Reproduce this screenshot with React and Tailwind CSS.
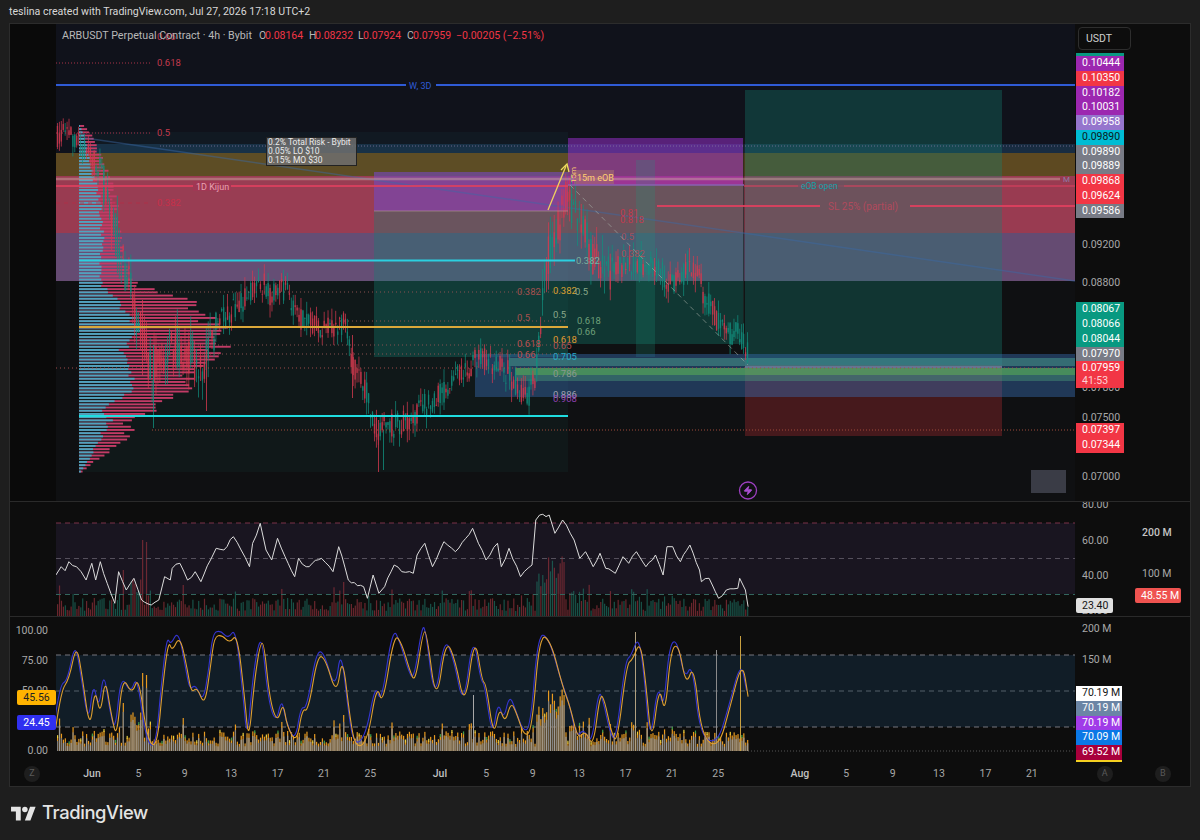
import React from 'react';
import { Zap } from 'lucide-react';

// seeded random so every render gives the same candles
let seed = 1337;
const rnd = () => {
  seed = (seed * 16807) % 2147483647;
  return (seed - 1) / 2147483646;
};

const interp = (pts, x) => {
  for (let i = 0; i < pts.length - 1; i++) {
    if (x <= pts[i + 1][0]) {
      const t = (x - pts[i][0]) / (pts[i + 1][0] - pts[i][0] || 1);
      return pts[i][1] + (pts[i + 1][1] - pts[i][1]) * t;
    }
  }
  return pts[pts.length - 1][1];
};

const zl = (pts) => pts.map(([x, y]) => [x / 2.613, 500 + y / 3]);
const zr = (pts) => pts.map(([x, y]) => [600 + x / 2.613, 500 + y / 3]);
const toLine = (pts) => pts.map(([x, y]) => `${x.toFixed(1)},${y.toFixed(1)}`).join(' ');

// quadratic curve through the midpoints, for the stochastic lines
const toSmooth = (pts) => {
  let d = `M${pts[0][0].toFixed(1)} ${pts[0][1].toFixed(1)}`;
  for (let i = 1; i < pts.length - 1; i++) {
    const mx = (pts[i][0] + pts[i + 1][0]) / 2;
    const my = (pts[i][1] + pts[i + 1][1]) / 2;
    d += ` Q${pts[i][0].toFixed(1)} ${pts[i][1].toFixed(1)} ${mx.toFixed(1)} ${my.toFixed(1)}`;
  }
  const last = pts[pts.length - 1];
  return `${d} L${last[0].toFixed(1)} ${last[1].toFixed(1)}`;
};

// adds small steps between the points, for the rsi line
const roughen = (pts) => {
  const out = [];
  for (let i = 0; i < pts.length - 1; i++) {
    const [x1, y1] = pts[i];
    const [x2, y2] = pts[i + 1];
    const steps = Math.max(1, Math.floor((x2 - x1) / 3));
    for (let s = 0; s < steps; s++) {
      const t = s / steps;
      const n = s === 0 ? 0 : (rnd() - 0.5) * 3.5;
      out.push([x1 + (x2 - x1) * t, y1 + (y2 - y1) * t + n]);
    }
  }
  out.push(pts[pts.length - 1]);
  return out;
};

const pricePath = [
  [56, 138], [70, 134], [85, 150], [100, 170], [115, 230], [130, 290], [145, 340], [150, 370], [165, 350], [180, 345],
  [195, 360], [205, 365], [215, 325], [230, 310], [245, 300], [260, 280], [272, 295], [285, 290], [300, 320], [320, 330],
  [345, 325], [352, 360], [365, 390], [378, 435], [385, 425], [400, 425], [415, 415], [430, 400], [450, 385], [475, 360],
  [490, 360], [510, 375], [525, 400], [535, 380], [545, 265], [555, 235], [568, 195], [575, 215], [590, 250], [610, 270],
  [630, 265], [650, 265], [670, 280], [695, 270], [710, 310], [725, 335], [740, 335], [748, 352],
];

const candles = [];
for (let i = 0; i < 358; i++) {
  const x = 57 + i * 1.933;
  const base = interp(pricePath, x);
  const wide = x < 100 ? 1.2 : x < 215 || (x > 540 && x < 610) ? 2.2 : 1.3;
  const open = base + (rnd() - 0.5) * 20 * wide;
  const close = base + (rnd() - 0.5) * 20 * wide;
  const top = Math.min(open, close) - rnd() * 10 * wide;
  const bottom = Math.max(open, close) + rnd() * 10 * wide;
  candles.push({ x, open, close, top, bottom, up: close < open });
}
const spikes = [[153, 345, 428, true], [206, 350, 411, false], [142, 300, 375, false], [352, 335, 398, false], [378, 420, 472, false], [383, 430, 470, true]];

const vpRows = [];
const vpShape = [
  [125, 80, 84], [135, 84, 92], [170, 92, 106], [200, 100, 115], [240, 102, 118], [280, 100, 130], [302, 118, 191],
  [327, 140, 215], [350, 120, 215], [375, 135, 195], [395, 125, 175], [410, 100, 150], [420, 110, 125], [430, 105, 133],
  [445, 95, 115], [460, 88, 95], [472, 80, 81],
];
for (let y = 125; y < 472; y += 3.2) {
  const j = 0.88 + rnd() * 0.24;
  const blue = interp(vpShape.map((r) => [r[0], r[1]]), y);
  const pink = interp(vpShape.map((r) => [r[0], r[2]]), y);
  vpRows.push({ y, blue: 79 + (blue - 79) * j, pink: 79 + (pink - 79) * j });
}

const volumes = candles.map((c) => {
  let h = 5 + rnd() * 13;
  if (rnd() > 0.92) h += rnd() * 18;
  if (c.x > 535 && c.x < 565) h += 12 + rnd() * 38;
  if (c.x > 565 && c.x < 590) h += rnd() * 14;
  if (c.x > 130 && c.x < 150) h += rnd() * 22;
  return { x: c.x, h, up: c.up };
});
volumes[44].h = 76;
volumes[46].h = 74;
volumes[34].h = 46;
volumes[148].h = 34;

const rsiLine = roughen([
  ...zl([[146, 225], [160, 200], [170, 212], [180, 185], [200, 200], [212, 215], [225, 240], [240, 190], [250, 240], [262, 185], [280, 250], [300, 310], [310, 215], [330, 270], [350, 235], [370, 300], [395, 315], [415, 300], [430, 230], [445, 240], [450, 205], [470, 190], [490, 240], [510, 215], [525, 245], [550, 180], [565, 145], [585, 150], [610, 110], [630, 150], [652, 200], [660, 130], [680, 70], [695, 150], [710, 180], [725, 115], [745, 170], [770, 230], [780, 175], [800, 200], [840, 175], [870, 215], [885, 140], [910, 240], [950, 260], [960, 295], [975, 225], [990, 280], [1005, 260], [1030, 195], [1050, 215], [1080, 220], [1090, 165], [1110, 130], [1130, 200], [1160, 125], [1190, 155], [1235, 85], [1250, 130], [1270, 180], [1300, 130], [1310, 200], [1330, 145], [1360, 230], [1390, 195], [1400, 60], [1410, 45], [1435, 45], [1450, 100], [1470, 60], [1500, 120], [1515, 175], [1530, 155], [1550, 200]]),
  ...zr([[0, 160], [15, 205], [40, 220], [60, 170], [75, 190], [95, 155], [120, 200], [145, 165], [165, 225], [175, 140], [190, 140], [210, 185], [235, 135], [260, 210], [265, 245], [285, 235], [310, 295], [330, 270], [360, 265], [365, 235], [380, 270], [387, 320]]),
]);

const stochLine = [
  ...zl([[146, 680], [160, 570], [180, 540], [200, 430], [215, 530], [235, 695], [248, 560], [262, 650], [275, 530], [290, 640], [305, 720], [320, 525], [345, 585], [362, 525], [385, 720], [410, 745], [425, 560], [440, 420], [450, 455], [470, 405], [490, 510], [500, 580], [515, 560], [535, 620], [550, 500], [560, 410], [580, 405], [600, 430], [620, 400], [640, 600], [650, 730], [665, 540], [680, 430], [690, 430], [705, 600], [725, 670], [740, 605], [750, 680], [775, 730], [790, 625], [805, 635], [830, 465], [850, 475], [880, 590], [895, 460], [915, 660], [930, 745], [960, 725], [985, 550], [1000, 620], [1030, 400], [1050, 430], [1070, 510], [1085, 550], [1105, 395], [1115, 395], [1140, 620], [1165, 415], [1190, 480], [1215, 630], [1240, 400], [1260, 545], [1270, 550], [1290, 715], [1305, 620], [1320, 670], [1335, 605], [1350, 640], [1370, 710], [1390, 690], [1410, 400], [1440, 425], [1470, 560], [1490, 620], [1510, 720], [1530, 690], [1550, 745]]),
  ...zr([[0, 580], [12, 600], [30, 700], [45, 730], [70, 490], [85, 480], [105, 420], [120, 550], [135, 740], [155, 550], [170, 650], [185, 450], [205, 430], [225, 560], [245, 490], [265, 710], [310, 745], [340, 620], [372, 480], [387, 590]]),
];
const stochBlue = stochLine.map(([x, y]) => [x - 1.5, Math.min(750, y - 3 + (rnd() - 0.5) * 8)]);

const bands = [
  { x: 85, y: 144, h: 9, fill: '#2a6a9a', o: 0.3 },
  { x: 56, y: 153, h: 23, fill: '#c8972a', o: 0.42 },
  { x: 56, y: 176, h: 57, fill: '#e0506e', o: 0.66 },
  { x: 56, y: 233, h: 48, fill: '#9a6fa8', o: 0.62 },
];

const fibs = [
  ['0.66', 157, 40, '#c23a4e'], ['0.618', 157, 66, '#c23a4e'], ['0.5', 157, 136, '#c23a4e'], ['0.382', 157, 206, '#c8304a'],
  ['0.382', 517, 295, '#a5504f'], ['0.382', 553, 294, '#d8a030'], ['0.5', 575, 295, '#8aa88a'], ['0.5', 517, 321, '#a5504f'],
  ['0.5', 553, 318, '#8aa88a'], ['0.618', 577, 324, '#6fa07a'], ['0.66', 577, 335, '#6fa07a'], ['0.618', 553, 343, '#e09a30'],
  ['0.65', 553, 349, '#b05050'], ['0.618', 517, 347, '#b85050'], ['0.66', 517, 358, '#b85050'], ['0.705', 553, 360, '#2aa8c8'],
  ['0.786', 553, 377, '#8a9a90'], ['0.886', 553, 398, '#a0a0b0'], ['0.908', 553, 402, '#9040b0'], ['0.382', 576, 264, '#7ab0a0'],
  ['0.81', 620, 216, '#c23a4e'], ['0.818', 620, 223, '#c23a4e'], ['0.5', 621, 240, '#a5505a'], ['0.382', 621, 257, '#a5505a'],
];

const priceTop = [
  ['0.10444', 'bg-[#9c27b0]', 'text-white'], ['0.10350', 'bg-[#f23645]', 'text-white'], ['0.10182', 'bg-[#9c27b0]', 'text-white'],
  ['0.10031', 'bg-[#9c27b0]', 'text-white'], ['0.09958', 'bg-[#9575cd]', 'text-white'], ['0.09890', 'bg-[#00bcd4]', 'text-[#0b1a20]'],
  ['0.09890', 'bg-[#787b86]', 'text-white'], ['0.09889', 'bg-[#787b86]', 'text-white'], ['0.09868', 'bg-[#f23645]', 'text-white'],
  ['0.09624', 'bg-[#f23645]', 'text-white'], ['0.09586', 'bg-[#787b86]', 'text-white'],
];

const stochTags = [
  ['70.19 M', 'bg-white', 'text-[#131313]'], ['70.19 M', 'bg-[#6b85a5]', 'text-white'], ['70.19 M', 'bg-[#a03be8]', 'text-white'],
  ['70.09 M', 'bg-[#0a78e6]', 'text-white'], ['69.52 M', 'bg-[#a8003c]', 'text-white'],
];

function Tag({ text, bg, color, className = '' }) {
  return <div className={`relative z-10 h-[14.75px] leading-[14.75px] pl-[6px] ${bg} ${color} ${className}`}>{text}</div>;
}

function MainChart() {
  return (
    <svg viewBox="56 24 1019 477" className="block w-[1019px] h-[477px]" fontFamily="Roboto, sans-serif">
      <rect x="56" y="24" width="1019" height="477" fill="#0f1012" />
      <rect x="56" y="24" width="1019" height="257" fill="#10121b" />
      <rect x="79" y="132" width="489" height="340" fill="#1f9a9a" opacity="0.06" />
      {bands.map((b) => (
        <rect key={b.y} x={b.x} y={b.y} width={1075 - b.x} height={b.h} fill={b.fill} opacity={b.o} />
      ))}
      {/* position boxes */}
      <rect x="374" y="172" width="194" height="185" fill="#148272" opacity="0.35" />
      <rect x="568" y="185" width="176" height="159" fill="#148272" opacity="0.35" />
      <rect x="745" y="90" width="257" height="275" fill="#148272" opacity="0.33" />
      <rect x="745" y="365" width="257" height="71" fill="#b02a30" opacity="0.35" />
      <rect x="374" y="172" width="194" height="39" fill="#a030d8" opacity="0.45" />
      <rect x="568" y="138" width="175" height="47" fill="#a030d8" opacity="0.5" />
      <rect x="636" y="160" width="19" height="197" fill="#1a9a80" opacity="0.22" />
      <rect x="743" y="138" width="1.5" height="206" fill="#1a1a1a" opacity="0.6" />
      {/* fvg bands near price */}
      <rect x="475" y="354" width="600" height="43" fill="#3a70b8" opacity="0.42" />
      <rect x="509" y="358" width="566" height="8" fill="#4aa090" opacity="0.5" />
      <rect x="515" y="368" width="560" height="7" fill="#5fc060" opacity="0.62" />
      <rect x="515" y="375" width="560" height="6" fill="#4a9a7a" opacity="0.45" />
      <line x1="745" x2="1002" y1="367" y2="367" stroke="#a0c8e0" strokeWidth="1" opacity="0.8" />
      {/* volume profile */}
      {vpRows.map((r) => (
        <g key={r.y}>
          <rect x="79" y={r.y} width={r.pink - 79} height="1.9" fill="#c23b66" />
          <rect x="79" y={r.y} width={r.blue - 79} height="1.9" fill="#38b6cf" opacity="0.85" />
        </g>
      ))}
      {/* trend line */}
      <line x1="85" y1="138" x2="1075" y2="281" stroke="#3a6aa8" strokeWidth="1.5" opacity="0.45" />
      {/* candles */}
      <g opacity="0.88">
        {candles.map((c) => (
          <g key={c.x} fill={c.up ? '#12907f' : '#d63a50'}>
            <rect x={c.x} y={c.top} width="0.8" height={c.bottom - c.top} />
            <rect x={c.x - 0.2} y={Math.min(c.open, c.close)} width="1.3" height={Math.abs(c.open - c.close) + 0.5} />
          </g>
        ))}
        {spikes.map(([x, a, b, up]) => (
          <rect key={x} x={x} y={a} width="0.9" height={b - a} fill={up ? '#12907f' : '#d63a50'} />
        ))}
      </g>
      {/* horizontal levels */}
      <line x1="56" x2="150" y1="63" y2="63" stroke="#a83348" strokeDasharray="1 2" />
      <line x1="56" x2="150" y1="133" y2="133" stroke="#a83348" strokeDasharray="1 2" />
      <line x1="56" x2="150" y1="203" y2="203" stroke="#b82c44" strokeDasharray="4 4" opacity="0.7" />
      <line x1="160" x2="1075" y1="146" y2="146" stroke="#8a7ea8" strokeDasharray="1 2" opacity="0.7" />
      <line x1="56" x2="1075" y1="85" y2="85" stroke="#2f5bd6" strokeWidth="2" />
      <rect x="406" y="80" width="30" height="10" fill="#10121b" />
      <text x="409" y="89" fontSize="9" fill="#2f5bd6">W, 3D</text>
      <line x1="56" x2="1060" y1="179" y2="179" stroke="#c9a3a0" strokeWidth="2.5" opacity="0.5" />
      <text x="1063" y="182" fontSize="8" fill="#8a7ea8">M</text>
      <line x1="56" x2="568" y1="186" y2="186" stroke="#e0405f" strokeWidth="1.8" opacity="0.85" />
      <line x1="568" x2="744" y1="185" y2="185" stroke="#8a60b0" strokeWidth="1.5" />
      <line x1="744" x2="1075" y1="186" y2="186" stroke="#e0405f" strokeWidth="1.5" opacity="0.7" />
      <rect x="193" y="181" width="38" height="10" fill="#a03854" />
      <text x="196" y="190" fontSize="9" fill="#e8a0b0">1D Kijun</text>
      <line x1="374" x2="568" y1="211" y2="211" stroke="#b89a9a" strokeWidth="1.5" opacity="0.4" />
      <rect x="798" y="181" width="46" height="9" fill="#6f515f" opacity="0.7" />
      <text x="801" y="188.5" fontSize="8.5" fill="#14a0a8">eOB open</text>
      <line x1="657" x2="820" y1="206" y2="206" stroke="#e0405f" strokeWidth="2" opacity="0.9" />
      <line x1="910" x2="1075" y1="206" y2="206" stroke="#e0405f" strokeWidth="2" opacity="0.9" />
      <text x="828" y="210" fontSize="10" fill="#b04a5c">SL 25% (partial)</text>
      <line x1="79" x2="575" y1="260.5" y2="260.5" stroke="#2bd0e0" strokeWidth="2" />
      <line x1="79" x2="568" y1="327" y2="327" stroke="#dba83a" strokeWidth="2" />
      <line x1="79" x2="568" y1="416" y2="416" stroke="#1fdde0" strokeWidth="2" />
      <line x1="140" x2="568" y1="292" y2="292" stroke="#8a5050" strokeDasharray="1 3" />
      <line x1="340" x2="568" y1="321" y2="321" stroke="#8a5050" strokeDasharray="1 3" />
      <line x1="150" x2="568" y1="345" y2="345" stroke="#8a5050" strokeDasharray="1 3" />
      <line x1="150" x2="568" y1="354" y2="354" stroke="#8a5050" strokeDasharray="1 3" />
      <line x1="56" x2="1075" y1="368" y2="368" stroke="#a04a4a" strokeDasharray="1 3" />
      <line x1="152" x2="1075" y1="430" y2="430" stroke="#a04a3a" strokeDasharray="1 2" />
      {fibs.map(([t, x, y, c]) => (
        <text key={`${t}${x}${y}`} x={x} y={y} fontSize="9.5" fill={c}>{t}</text>
      ))}
      {/* drawings around the high */}
      <line x1="570" y1="185" x2="748" y2="365" stroke="#a8b0a8" strokeWidth="1" strokeDasharray="5 4" opacity="0.6" />
      <line x1="548" y1="210" x2="566" y2="166" stroke="#f0d060" strokeWidth="1.3" />
      <path d="M561 170 L567 164 L569 172" fill="none" stroke="#f0e060" strokeWidth="1.3" />
      <rect x="574" y="170" width="40" height="14" fill="#a06a70" opacity="0.65" />
      <text x="577" y="180.5" fontSize="9" fill="#ffcf70">15m eOB</text>
      <text x="0" y="0" fontSize="8" fill="#ffcf70" transform="translate(576 183) rotate(-90)">15m</text>
      {/* risk note */}
      <rect x="266.5" y="137.5" width="90" height="28" fill="#6f6f6f" fillOpacity="0.85" stroke="#222" />
      <text fontSize="8.5" fill="#ececec">
        <tspan x="268" y="145">0.2% Total Risk - Bybit</tspan>
        <tspan x="268" y="154">0.05%  LO $10</tspan>
        <tspan x="268" y="163">0.15% MO  $30</tspan>
      </text>
      {/* legend */}
      <text fontSize="10.5" fill="#b8b8b8" y="39">
        <tspan x="62" fontSize="10.7">ARBUSDT Perpetual Contract · 4h · Bybit</tspan>
        <tspan x="259">O</tspan><tspan x="265" fill="#f23645">0.08164</tspan>
        <tspan x="309">H</tspan><tspan x="315" fill="#f23645">0.08232</tspan>
        <tspan x="358">L</tspan><tspan x="363" fill="#f23645">0.07924</tspan>
        <tspan x="407">C</tspan><tspan x="413" fill="#f23645">0.07959</tspan>
        <tspan x="456" fill="#f23645">−0.00205 (−2.51%)</tspan>
      </text>
      <rect x="1031" y="470" width="35" height="23" fill="#3a3c46" />
      <circle cx="748" cy="490.5" r="8.5" fill="none" stroke="#9c3fc0" strokeWidth="1.3" />
      <g transform="translate(743 485.5)">
        <Zap width="10" height="10" color="#a84fd0" fill="#a84fd0" />
      </g>
    </svg>
  );
}

function RsiChart() {
  return (
    <svg viewBox="56 502 1019 114" className="block w-[1019px] h-[114px]">
      <rect x="56" y="502" width="1019" height="114" fill="#0d0d0d" />
      <rect x="56" y="523" width="1019" height="71" fill="#191520" />
      {volumes.map((v) => (
        <rect key={v.x} x={v.x} y={616 - v.h} width="1.2" height={v.h} fill={v.up ? '#1c6a5c' : '#8a2f38'} opacity="0.75" />
      ))}
      <line x1="56" x2="1075" y1="523" y2="523" stroke="#7a3348" strokeDasharray="5 4" />
      <line x1="56" x2="1075" y1="558.5" y2="558.5" stroke="#55505c" strokeDasharray="5 4" />
      <line x1="56" x2="1075" y1="594.5" y2="594.5" stroke="#33665e" strokeDasharray="5 4" />
      <polyline points={toLine(rsiLine)} fill="none" stroke="#dcdcdc" strokeWidth="1" />
    </svg>
  );
}

function StochChart() {
  return (
    <svg viewBox="56 617 1019 145" className="block w-[1019px] h-[145px]">
      <rect x="56" y="617" width="1019" height="145" fill="#0d0d0d" />
      <rect x="56" y="655" width="1019" height="72" fill="#111d27" />
      <line x1="56" x2="1075" y1="655" y2="655" stroke="#77777e" strokeDasharray="5 4" />
      <line x1="56" x2="1075" y1="691" y2="691" stroke="#55606a" strokeDasharray="5 4" />
      <line x1="56" x2="1075" y1="727" y2="727" stroke="#77777e" strokeDasharray="5 4" />
      <line x1="748" x2="1075" y1="751" y2="751" stroke="#555" strokeDasharray="1 2" />
      {volumes.map((v, i) => (
        <g key={v.x}>
          <rect x={v.x} y={751 - v.h - 2} width="1.2" height={v.h + 2} fill="#e89a20" />
          <rect x={v.x} y={751 - v.h * 0.85} width="1.2" height={v.h * 0.85} fill={i % 2 ? '#9a9a9a' : '#7f7f7f'} />
          {i % 6 === 0 && <rect x={v.x} y={751 - v.h - 4} width="1.2" height="3" fill={i % 12 ? '#3fa04a' : '#e8d040'} />}
        </g>
      ))}
      <rect x="716" y="650" width="1" height="101" fill="#8a8a8a" />
      <rect x="740" y="636" width="1" height="115" fill="#c8a040" />
      <rect x="635" y="632" width="1" height="119" fill="#b0a080" />
      <rect x="473" y="695" width="1" height="56" fill="#a8a8a8" />
      <path d={toSmooth(stochBlue)} fill="none" stroke="#3535d0" strokeWidth="1.1" />
      <path d={toSmooth(stochLine)} fill="none" stroke="#e0a030" strokeWidth="1.1" />
    </svg>
  );
}

function AxisCircle({ label, className = '' }) {
  return (
    <div className={`w-[16px] h-[16px] rounded-full bg-[#1e1e1e] text-[#5a5a5a] text-[9px] flex items-center justify-center ${className}`}>{label}</div>
  );
}

export default function App() {
  const scale = 'text-[10.5px] text-[#a8a8a8]';

  return (
    <div className="w-[1200px] h-[840px] bg-[#1e1e1e] flex flex-col font-[Roboto,sans-serif] overflow-hidden">
      <div className="h-[23px] pl-[9px] flex items-center text-[#d8d8d8] text-[10.6px]">
        teslina created with TradingView.com, Jul 27, 2026 17:18 UTC+2
      </div>

      <div className="ml-[9px] w-[1182px] h-[764px] border border-[#2c2c2c] flex flex-col bg-[#0d0d0d]">
        {/* main pane */}
        <div className="flex h-[478px] border-b border-[#2a2a2a] overflow-hidden">
          <div className="w-[46px] bg-[#0a0a0a]" />
          <MainChart />
          <div className={`w-[115px] flex flex-col items-start ${scale}`}>
            <div className="ml-[3px] mt-[3px] w-[53px] h-[23px] rounded-[4px] border border-[#2e2e2e] pl-[7px] flex items-center text-[#cfcfcf]">USDT</div>
            <div className="ml-[1px] mt-[3px] w-[48px] h-[3px] bg-[#089981]" />
            <div className="ml-[1px] w-[48px]">
              {priceTop.map(([t, bg, c], i) => (
                <Tag key={i} text={t} bg={bg} color={c} />
              ))}
            </div>
            <div className="ml-[7px] mt-[20px] h-[14px] leading-[14px]">0.09200</div>
            <div className="ml-[7px] mt-[24px] h-[14px] leading-[14px]">0.08800</div>
            <div className="ml-[1px] mt-[12px] w-[48px]">
              <Tag text="0.08067" bg="bg-[#089981]" color="text-white" />
              <Tag text="0.08066" bg="bg-[#089981]" color="text-white" />
              <Tag text="0.08044" bg="bg-[#089981]" color="text-white" />
              <Tag text="0.07970" bg="bg-[#787b86]" color="text-white" />
              <div className="relative z-10 h-[27px] pl-[6px] pt-[1px] bg-[#f23645] text-white leading-[12.5px]">
                0.07959
                <div className="text-[#ffd0d4]">41:53</div>
              </div>
            </div>
            <div className="ml-[7px] mt-[-7px] h-[14px] leading-[14px]">0.07800</div>
            <div className="ml-[7px] mt-[16px] h-[14px] leading-[14px]">0.07500</div>
            <div className="relative z-10 ml-[1px] mt-[-2px] w-[48px]">
              <Tag text="0.07397" bg="bg-[#f23645]" color="text-white" />
              <Tag text="0.07344" bg="bg-[#f23645]" color="text-white" />
            </div>
            <div className="ml-[7px] mt-[17px] h-[14px] leading-[14px]">0.07000</div>
          </div>
        </div>

        {/* rsi + volume pane */}
        <div className="flex h-[115px] border-b border-[#2a2a2a] overflow-hidden">
          <div className="w-[46px]" />
          <RsiChart />
          <div className={`w-[115px] flex ${scale}`}>
            <div className="w-[60px] flex flex-col items-start">
              <div className="ml-[7px] mt-[-4px] h-[14px] leading-[14px]">80.00</div>
              <div className="ml-[7px] mt-[22px] h-[14px] leading-[14px]">60.00</div>
              <div className="ml-[7px] mt-[21px] h-[14px] leading-[14px]">40.00</div>
              <div className="relative z-10 ml-[1px] mt-[15px] w-[37px] h-[15px] leading-[15px] pl-[6px] rounded-[2px] bg-[#e0e0e0] text-[#131313]">23.40</div>
              <div className="ml-[7px] mt-[-9px] h-[14px] leading-[14px]">20.00</div>
            </div>
            <div className="flex flex-col items-start">
              <div className="ml-[7px] mt-[24px] h-[14px] leading-[14px] font-medium text-[#c4c4c4]">200 M</div>
              <div className="ml-[7px] mt-[27px] h-[14px] leading-[14px]">100 M</div>
              <div className="mt-[7px] w-[46px] h-[15px] leading-[15px] pl-[6px] rounded-[2px] bg-[#ef5350] text-white">48.55 M</div>
            </div>
          </div>
        </div>

        {/* stoch pane */}
        <div className="flex h-[145px] overflow-hidden">
          <div className={`w-[46px] flex flex-col items-end ${scale}`}>
            <div className="mr-[8px] mt-[7px] h-[14px] leading-[14px]">100.00</div>
            <div className="mr-[8px] mt-[16px] h-[14px] leading-[14px]">75.00</div>
            <div className="mr-[8px] mt-[16px] h-[14px] leading-[14px]">50.00</div>
            <div className="relative z-10 mt-[-8px] w-[39px] h-[15px] leading-[15px] text-center rounded-[2px] bg-[#ffb300] text-[#222]">45.56</div>
            <div className="mt-[10px] w-[39px] h-[15px] leading-[15px] text-center rounded-[2px] bg-[#3030f0] text-white">24.45</div>
            <div className="mr-[8px] mt-[14px] h-[14px] leading-[14px]">0.00</div>
          </div>
          <StochChart />
          <div className={`w-[115px] flex flex-col items-start ${scale}`}>
            <div className="ml-[7px] mt-[5px] h-[14px] leading-[14px]">200 M</div>
            <div className="ml-[7px] mt-[17px] h-[14px] leading-[14px]">150 M</div>
            <div className="ml-[1px] mt-[19px] w-[46px]">
              {stochTags.map(([t, bg, c], i) => (
                <Tag key={i} text={t} bg={bg} color={c} />
              ))}
              <div className="h-[3px] bg-[#f5d020]" />
            </div>
          </div>
        </div>

        {/* time axis */}
        <div className="flex items-center h-[24px] text-[10.5px] text-[#a8a8a8] text-center">
          <AxisCircle label="Z" className="ml-[14px] shrink-0" />
          <div className="ml-[28.8px] w-[46.4px] font-medium text-[#c0c0c0]">Jun</div>
          {['5', '9', '13', '17', '21', '25'].map((d) => (
            <div key={d} className="w-[46.4px]">{d}</div>
          ))}
          <div className="ml-[23.2px] w-[46.4px] font-medium text-[#c0c0c0]">Jul</div>
          {['5', '9', '13', '17', '21', '25'].map((d) => (
            <div key={d} className="w-[46.4px]">{d}</div>
          ))}
          <div className="ml-[35.2px] w-[46.4px] font-medium text-[#c0c0c0]">Aug</div>
          {['5', '9', '13', '17', '21'].map((d) => (
            <div key={d} className="w-[46.4px]">{d}</div>
          ))}
          <AxisCircle label="A" className="ml-[41.8px] shrink-0" />
          <AxisCircle label="B" className="ml-[42px] shrink-0" />
        </div>
      </div>

      {/* footer logo */}
      <div className="flex-1 pl-[10px] flex items-center gap-[5px] pb-[2px] text-[#e4e4e4]">
        <svg viewBox="0 0 36 26" className="w-[27px] h-[18px]" fill="currentColor">
          <path d="M14 24H7V11H0V4h14v20zM28 24h-8l7.5-20h8L28 24z" />
          <circle cx="20" cy="8" r="4" />
        </svg>
        <span className="text-[18.4px] font-[Inter,sans-serif] font-medium tracking-[-0.4px]">TradingView</span>
      </div>
    </div>
  );
}
